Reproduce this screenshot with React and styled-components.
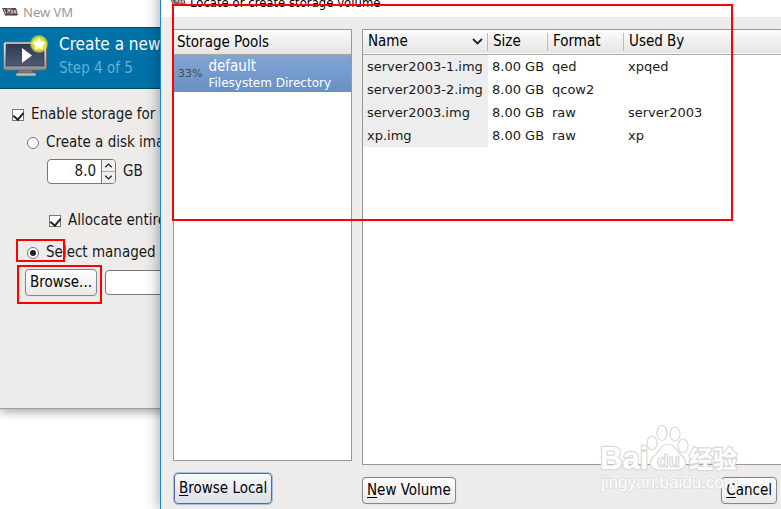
import React from 'react'
import { useState } from 'react'
import styled, { createGlobalStyle } from 'styled-components'

const pools = [{ name: 'default', kind: 'Filesystem Directory', used: '33%' }]

const volumes = [
  { name: 'server2003-1.img', size: '8.00 GB', format: 'qed', usedBy: 'xpqed' },
  { name: 'server2003-2.img', size: '8.00 GB', format: 'qcow2', usedBy: '' },
  { name: 'server2003.img', size: '8.00 GB', format: 'raw', usedBy: 'server2003' },
  { name: 'xp.img', size: '8.00 GB', format: 'raw', usedBy: 'xp' },
]

const VmLogo = () => (
  <svg width="16" height="10" viewBox="0 0 16 10" aria-hidden="true">
    <path d="M0 1h5l1 7H3z" fill="#4b4b4b" />
    <path d="M5 1h4l1 7H6z" fill="#8a5c5c" />
    <path d="M9 1h5l2 7h-6z" fill="#505050" />
    <path d="M2 2l2 5M6 2l1 3 1-3M10 7V3l2 3 1-3 1 4" stroke="#c9c4c4" fill="none" />
    <path d="M3 8h12" stroke="#333" strokeWidth="1" />
  </svg>
)

const MonitorIcon = () => (
  <svg width="48" height="44" viewBox="0 0 48 44" aria-hidden="true">
    <defs>
      <linearGradient id="screen" x1="0" y1="0" x2="0" y2="1">
        <stop offset="0" stopColor="#2f3b52" />
        <stop offset="1" stopColor="#4d5c74" />
      </linearGradient>
      <linearGradient id="frame" x1="0" y1="0" x2="0" y2="1">
        <stop offset="0" stopColor="#f4f4f4" />
        <stop offset="1" stopColor="#8e8e8e" />
      </linearGradient>
      <radialGradient id="glow">
        <stop offset="0.5" stopColor="#f3f03a" />
        <stop offset="0.8" stopColor="#d9e62c" stopOpacity="0.8" />
        <stop offset="1" stopColor="#d9e62c" stopOpacity="0" />
      </radialGradient>
    </defs>
    <path d="M18 36h13l1 5H17z" fill="#777" />
    <rect x="15" y="40" width="20" height="3" rx="1" fill="#bdbdbd" stroke="#666" strokeWidth="0.6" />
    <rect x="2.500" y="9" width="43" height="28" rx="2" fill="url(#frame)" stroke="#6c6c6c" />
    <rect x="5" y="11" width="38" height="22" fill="url(#screen)" stroke="#29344a" strokeWidth="0.6" />
    <path d="M21 15v15l10-7.500z" fill="#fff" />
    <circle cx="38" cy="11" r="9.500" fill="url(#glow)" />
    <path d="M38 4.500l2 4.200 4.600.5-3.400 3.200.9 4.600-4.100-2.300-4.100 2.300.9-4.600-3.400-3.200 4.600-.5z" fill="#fff" />
  </svg>
)

const Chevron = ({ up, size = 9 }) => (
  <svg width={size} height={size === 9 ? 5 : 7} viewBox="0 0 11 7" aria-hidden="true">
    <path d={up ? 'M1 6l4.500-4.500L10 6' : 'M1 1l4.500 4.500L10 1'} fill="none" stroke="#222" strokeWidth="1.800" />
  </svg>
)

const App = () => {
  const [enabled, setEnabled] = useState(true)
  const [allocate, setAllocate] = useState(true)
  const [source, setSource] = useState('managed')
  const [size, setSize] = useState(8)
  const [path, setPath] = useState('')

  return (
    <Desktop>
      <GlobalStyle />
      <VmWindow>
        <VmTitle><VmLogo />New VM</VmTitle>
        <Banner>
          <MonitorIcon />
          <div>
            <h1>Create a new virtual machine</h1>
            <p>Step 4 of 5</p>
          </div>
        </Banner>
        <Form onSubmit={(e) => e.preventDefault()}>
          <Option>
            <Tick type="checkbox" checked={enabled} onChange={(e) => setEnabled(e.target.checked)} />
            Enable storage for this virtual machine
          </Option>
          <Option $level={1}>
            <Radio type="radio" name="source" checked={source === 'new'} onChange={() => setSource('new')} />
            Create a disk image for the virtual machine
          </Option>
          <SizeRow>
            <Spin>
              <input type="text" aria-label="Disk size" value={size.toFixed(1)} readOnly />
              <SpinButtons>
                <button type="button" aria-label="Increase" onClick={() => setSize(size + 1)}><Chevron up /></button>
                <button type="button" aria-label="Decrease" onClick={() => setSize(Math.max(1, size - 1))}><Chevron /></button>
              </SpinButtons>
            </Spin>
            GB
          </SizeRow>
          <Option $level={2}>
            <Tick type="checkbox" checked={allocate} onChange={(e) => setAllocate(e.target.checked)} />
            Allocate entire disk now
          </Option>
          <Option $level={1}>
            <Radio type="radio" name="source" checked={source === 'managed'} onChange={() => setSource('managed')} />
            Select managed or other existing storage
          </Option>
          <BrowseRow>
            <Button type="button">Browse...</Button>
            <PathInput type="text" aria-label="Storage path" value={path} onChange={(e) => setPath(e.target.value)} />
          </BrowseRow>
        </Form>
      </VmWindow>

      <VolumeWindow>
        <VolumeTitle><VmLogo />Locate or create storage volume</VolumeTitle>
        <Panes>
          <PoolPane>
            <PoolList>
              <PoolHead>Storage Pools</PoolHead>
              {pools.map((pool) => (
                <Pool key={pool.name}>
                  <Used>{pool.used}</Used>
                  <div>
                    <PoolName>{pool.name}</PoolName>
                    <PoolKind>{pool.kind}</PoolKind>
                  </div>
                </Pool>
              ))}
            </PoolList>
            <div>
              <Button type="button" $focused><u>B</u>rowse Local</Button>
            </div>
          </PoolPane>
          <VolumePane>
            <VolumeList>
              <Table>
                <thead>
                  <tr>
                    <th><SortHead>Name<Chevron size={11} /></SortHead></th>
                    <th>Size</th>
                    <th>Format</th>
                    <th>Used By</th>
                  </tr>
                </thead>
                <tbody>
                  {volumes.map((v) => (
                    <tr key={v.name}>
                      <td>{v.name}</td>
                      <td>{v.size}</td>
                      <td>{v.format}</td>
                      <td>{v.usedBy}</td>
                    </tr>
                  ))}
                </tbody>
              </Table>
            </VolumeList>
            <Actions>
              <Button type="button"><u>N</u>ew Volume</Button>
              <Button type="button"><u>C</u>ancel</Button>
            </Actions>
          </VolumePane>
        </Panes>
      </VolumeWindow>

      <Mark $x={172} $y={4} $w={561} $h={217} />
      <Mark $x={16} $y={239} $w={49} $h={23} />
      <Mark $x={17} $y={265} $w={85} $h={39} />
      <Watermark />
    </Desktop>
  )
}

const Watermark = () => (
  <Stamp width="144" height="72" viewBox="0 0 144 72" role="img" aria-label="Baidu">
    <g fill="#fff" stroke="#d9d9d9" strokeWidth="1.200">
      <g paintOrder="stroke" strokeWidth="2.400" fontWeight="700">
        <text x="1" y="45" fontSize="31">Bai</text>
        <text x="90" y="44" fontSize="24">经验</text>
      </g>
      <ellipse cx="53" cy="19" rx="5" ry="7" />
      <ellipse cx="63" cy="9" rx="5" ry="7.500" />
      <ellipse cx="76" cy="10" rx="5" ry="7" />
      <ellipse cx="84" cy="22" rx="5" ry="7" />
      <path d="M69 20c6 0 8 6 12 10 5 4 7 8 5 12-3 5-10 4-17 4s-14 1-17-4c-2-4 0-8 5-12 4-4 6-10 12-10z" />
      <text x="58" y="43" fontSize="19" fontWeight="700">du</text>
    </g>
    <text x="2" y="64" fontSize="17" fill="#fff" stroke="#dedede" strokeWidth="1.600" paintOrder="stroke">jingyan.baidu.com</text>
  </Stamp>
)

const GlobalStyle = createGlobalStyle`
  * {
    box-sizing: border-box;
  }
  body {
    margin: 0;
    background: #fff;
    font-family: "DejaVu Sans Condensed", "DejaVu Sans", sans-serif;
    font-size: 15px;
    line-height: 23px;
    color: #1a1a1a;
  }
  button, input {
    font: inherit;
    color: inherit;
  }
  h1, p {
    margin: 0;
    font-weight: 400;
  }
`

const Desktop = styled.div`
  position: relative;
  height: 100vh;
  overflow: hidden;
`

const VmWindow = styled.section`
  position: absolute;
  top: 0;
  left: 0;
  width: 400px;
  padding-bottom: 98px;
  background: #edeceb;
  border-bottom: 1px solid #a0a0a0;
  box-shadow: 0 2px 10px rgba(0, 0, 0, 0.4);
`

const VmTitle = styled.header`
  display: flex;
  align-items: center;
  gap: 5px;
  height: 27px;
  padding: 0 0 3px 2px;
  background: #fff;
  color: #999;
  font-family: "Noto Sans", sans-serif;
  font-size: 13px;
`

const Banner = styled.div`
  display: flex;
  gap: 8px;
  height: 62px;
  padding: 5px 0 0 1px;
  background: #0072a8;
  border-top: 1px solid #04496b;
  border-bottom: 1px solid #04496b;
  white-space: nowrap;
  h1 {
    color: #fff;
    font-size: 17px;
    line-height: 22px;
  }
  p {
    color: #5fb0dc;
    line-height: 26px;
  }
  svg {
    flex: none;
    margin-right: 2px;
  }
`

const Form = styled.form`
  padding: 14px 12px;
`

const Option = styled.label`
  display: flex;
  align-items: center;
  gap: 7px;
  padding-left: ${({ $level }) => ({ 1: '15px', 2: '37px' }[$level] || 0)};
  margin-bottom: ${({ $level }) => ($level === 2 ? '9px' : '5px')};
  white-space: nowrap;
`

const Tick = styled.input`
  appearance: none;
  display: grid;
  justify-items: center;
  width: 12px;
  height: 12px;
  margin: 0;
  background: #fff;
  border: 1px solid #777;
  &:checked::after {
    content: "";
    width: 5px;
    height: 8px;
    border: solid #222;
    border-width: 0 2px 2px 0;
    transform: rotate(40deg);
  }
`

const Radio = styled.input`
  appearance: none;
  display: grid;
  place-items: center;
  width: 12px;
  height: 12px;
  margin: 0;
  background: #fff;
  border: 1px solid #777;
  border-radius: 50%;
  &:checked::after {
    content: "";
    width: 6px;
    height: 6px;
    border-radius: 50%;
    background: #222;
  }
`

const SizeRow = styled.div`
  display: flex;
  align-items: center;
  gap: 7px;
  padding-left: 35px;
  margin-bottom: 25px;
`

const Spin = styled.div`
  display: flex;
  width: 69px;
  height: 25px;
  background: #fff;
  border: 1px solid #777;
  border-radius: 4px;
  overflow: hidden;
  input {
    flex: 1;
    min-width: 0;
    padding: 0 5px 0 0;
    border: 0;
    background: none;
    text-align: right;
  }
`

const SpinButtons = styled.div`
  display: flex;
  flex-direction: column;
  width: 14px;
  border-left: 1px solid #777;
  button {
    display: flex;
    flex: 1;
    align-items: center;
    justify-content: center;
    padding: 0;
    border: 0;
    background: #f1f0ef;
  }
  button + button {
    border-top: 1px solid #aaa;
  }
`

const BrowseRow = styled.div`
  display: flex;
  align-items: center;
  gap: 8px;
  padding-left: 13px;
`

const Button = styled.button`
  height: ${({ $focused }) => ($focused ? '31px' : '27px')};
  padding: 0 4px;
  white-space: nowrap;
  color: #000;
  border: 1px solid ${({ $focused }) => ($focused ? '#4a6fa8' : '#8a8886')};
  border-radius: 4px;
  background: ${({ $focused }) =>
    $focused
      ? 'linear-gradient(#f7f9fc, #e9ecf3 50%, #dcdfe6)'
      : 'linear-gradient(#fff, #f4f4f3 50%, #eae9e8)'};
  box-shadow: ${({ $focused }) => ($focused ? '0 0 0 1px #a9bfde' : '0 0 1px #aaa')};
  u {
    text-underline-offset: 2px;
  }
`

const PathInput = styled.input`
  flex: 1;
  height: 25px;
  padding: 0 5px;
  background: #fff;
  border: 1px solid #777;
  border-radius: 4px;
`

const VolumeWindow = styled.section`
  position: absolute;
  top: -11px;
  right: 0;
  bottom: 0;
  left: 160px;
  display: flex;
  flex-direction: column;
  background: #edeceb;
  border-left: 1px solid #1883d7;
  box-shadow: 0 0 14px rgba(0, 0, 0, 0.4);
`

const VolumeTitle = styled.header`
  display: flex;
  align-items: center;
  gap: 4px;
  height: 28px;
  padding: 0 0 2px 9px;
  background: #fff;
  color: #000;
  font-size: 13px;
`

const Panes = styled.div`
  display: flex;
  flex: 1;
  gap: 10px;
  padding: 12px 0 5px 12px;
`

const PoolPane = styled.div`
  display: flex;
  flex-direction: column;
  gap: 12px;
  width: 179px;
  button {
    margin-left: 1px;
  }
`

const PoolList = styled.div`
  flex: 1;
  background: #fff;
  border: 1px solid #9a9894;
`

const PoolHead = styled.div`
  height: 25px;
  padding-left: 3px;
  line-height: 25px;
  color: #000;
  background: linear-gradient(#fcfcfc, #e6e4e3);
  border-bottom: 1px solid #aaa6a2;
`

const Pool = styled.div`
  display: flex;
  align-items: center;
  gap: 6px;
  height: 37px;
  padding-left: 4px;
  color: #fff;
  background: linear-gradient(#82a4d6, #6790c5);
`

const Used = styled.span`
  font-family: "DejaVu Sans", sans-serif;
  font-size: 11px;
  color: #4a4a4a;
`

const PoolName = styled.div`
  line-height: 19px;
`

const PoolKind = styled.div`
  font-family: "DejaVu Sans", sans-serif;
  font-size: 12px;
  line-height: 14px;
`

const VolumePane = styled.div`
  display: flex;
  flex: 1;
  flex-direction: column;
  gap: 12px;
  min-width: 0;
`

const VolumeList = styled.div`
  flex: 1;
  background: #fff;
  border: 1px solid #9a9894;
  border-right: 0;
`

const Table = styled.table`
  width: 100%;
  table-layout: fixed;
  border-collapse: collapse;
  text-align: left;
  thead {
    background: linear-gradient(#fcfcfc, #e6e4e3);
    border-bottom: 1px solid #aaa6a2;
  }
  th {
    height: 24px;
    padding: 0 5px;
    font-weight: 400;
    color: #000;
    background: linear-gradient(#bbb, #bbb) right center / 1px 18px no-repeat;
  }
  th:last-child {
    background: none;
  }
  td {
    height: 23px;
    padding: 0 0 0 4px;
    font-family: "DejaVu Sans", sans-serif;
    font-size: 13px;
    white-space: nowrap;
  }
  th:nth-child(1) {
    width: 125px;
  }
  th:nth-child(2) {
    width: 60px;
  }
  th:nth-child(3) {
    width: 76px;
  }
  td:first-child {
    background: #ededed;
  }
`

const SortHead = styled.span`
  display: flex;
  align-items: center;
  justify-content: space-between;
`

const Actions = styled.div`
  display: flex;
  justify-content: space-between;
  padding-right: 4px;
`

// highlight frame over the windows
const Mark = styled.div`
  position: absolute;
  top: ${({ $y }) => $y}px;
  left: ${({ $x }) => $x}px;
  width: ${({ $w }) => $w}px;
  height: ${({ $h }) => $h}px;
  border: 2px solid #f00;
  pointer-events: none;
`

const Stamp = styled.svg`
  position: absolute;
  right: 38px;
  bottom: 13px;
  pointer-events: none;
  font-family: "Liberation Sans", "Noto Sans CJK SC", sans-serif;
`

export default App
